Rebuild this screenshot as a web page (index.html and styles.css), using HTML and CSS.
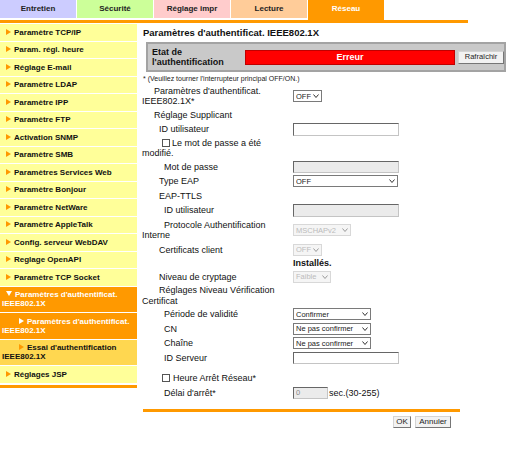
FILE: index.html
```html
<!DOCTYPE html>
<html lang="fr">
<head>
    <meta charset="UTF-8">
    <meta name="viewport" content="width=device-width, initial-scale=1.0">
    <title>Paramètres d'authentificat. IEEE802.1X</title>
    <link rel="stylesheet" href="styles.css">
</head>
<body>
    <nav class="tabs">
        <div class="tab tab-entretien">Entretien</div>
        <div class="tab tab-securite">Sécurité</div>
        <div class="tab tab-impr">Réglage impr</div>
        <div class="tab tab-lecture">Lecture</div>
        <div class="tab tab-reseau">Réseau</div>
    </nav>
    <div class="tab-line"></div>

    <div class="page">
        <ul class="side-menu">
            <li class="menu-item">Paramètre TCP/IP</li>
            <li class="menu-item">Param. régl. heure</li>
            <li class="menu-item">Réglage E-mail</li>
            <li class="menu-item">Paramètre LDAP</li>
            <li class="menu-item">Paramètre IPP</li>
            <li class="menu-item">Paramètre FTP</li>
            <li class="menu-item">Activation SNMP</li>
            <li class="menu-item">Paramètre SMB</li>
            <li class="menu-item">Paramètres Services Web</li>
            <li class="menu-item">Paramètre Bonjour</li>
            <li class="menu-item">Paramètre NetWare</li>
            <li class="menu-item">Paramètre AppleTalk</li>
            <li class="menu-item">Config. serveur WebDAV</li>
            <li class="menu-item">Reglage OpenAPI</li>
            <li class="menu-item">Paramètre TCP Socket</li>
            <li class="menu-item open">Paramètres d'authentificat. IEEE802.1X</li>
            <li class="menu-item sub current">Paramètres d'authentificat. IEEE802.1X</li>
            <li class="menu-item sub alt">Essai d'authentification IEEE802.1X</li>
            <li class="menu-item">Réglages JSP</li>
        </ul>

        <main class="content">
            <h1 class="page-title">Paramètres d'authentificat. IEEE802.1X</h1>

            <div class="status-box">
                <div class="status-label">Etat de<br>l'authentification</div>
                <div class="status-value">Erreur</div>
                <button class="small-btn refresh-btn">Rafraîchir</button>
            </div>

            <p class="note">* (Veuillez tourner l'interrupteur principal OFF/ON.)</p>

            <form class="settings-form">
                <div class="row">
                    <div class="lbl l0">Paramètres d'authentificat. IEEE802.1X*</div>
                    <div class="ctl">
                        <span class="sel"><select class="w-off"><option>OFF</option></select><svg viewBox="0 0 6 4"><polyline points="0.5,0.5 3,3.5 5.5,0.5"/></svg></span>
                    </div>
                </div>
                <div class="row">
                    <div class="lbl l0">Réglage Supplicant</div>
                    <div class="ctl"></div>
                </div>
                <div class="row">
                    <div class="lbl l1">ID utilisateur</div>
                    <div class="ctl"><input type="text" class="txt w-txt"></div>
                </div>
                <div class="row">
                    <div class="lbl lc"><input type="checkbox" class="chk">Le mot de passe a été modifié.</div>
                    <div class="ctl"></div>
                </div>
                <div class="row">
                    <div class="lbl l2">Mot de passe</div>
                    <div class="ctl"><input type="password" class="txt w-txt" disabled></div>
                </div>
                <div class="row">
                    <div class="lbl l1">Type EAP</div>
                    <div class="ctl">
                        <span class="sel"><select class="w-eap"><option>OFF</option></select><svg viewBox="0 0 6 4"><polyline points="0.5,0.5 3,3.5 5.5,0.5"/></svg></span>
                    </div>
                </div>
                <div class="row">
                    <div class="lbl l1">EAP-TTLS</div>
                    <div class="ctl"></div>
                </div>
                <div class="row">
                    <div class="lbl l2">ID utilisateur</div>
                    <div class="ctl"><input type="text" class="txt w-txt" disabled></div>
                </div>
                <div class="row tall">
                    <div class="lbl l2">Protocole Authentification Interne</div>
                    <div class="ctl">
                        <span class="sel off"><select class="w-mschap" disabled><option>MSCHAPv2</option></select><svg viewBox="0 0 6 4"><polyline points="0.5,0.5 3,3.5 5.5,0.5"/></svg></span>
                    </div>
                </div>
                <div class="row">
                    <div class="lbl l1">Certificats client</div>
                    <div class="ctl">
                        <span class="sel off"><select class="w-off" disabled><option>OFF</option></select><svg viewBox="0 0 6 4"><polyline points="0.5,0.5 3,3.5 5.5,0.5"/></svg></span>
                    </div>
                </div>
                <div class="row short">
                    <div class="lbl"></div>
                    <div class="ctl"><b>Installés.</b></div>
                </div>
                <div class="row">
                    <div class="lbl l1">Niveau de cryptage</div>
                    <div class="ctl">
                        <span class="sel off"><select class="w-faible" disabled><option>Faible</option></select><svg viewBox="0 0 6 4"><polyline points="0.5,0.5 3,3.5 5.5,0.5"/></svg></span>
                    </div>
                </div>
                <div class="row">
                    <div class="lbl l1">Réglages Niveau Vérification Certificat</div>
                    <div class="ctl"></div>
                </div>
                <div class="row">
                    <div class="lbl l2">Période de validité</div>
                    <div class="ctl">
                        <span class="sel"><select class="w-conf"><option>Confirmer</option></select><svg viewBox="0 0 6 4"><polyline points="0.5,0.5 3,3.5 5.5,0.5"/></svg></span>
                    </div>
                </div>
                <div class="row">
                    <div class="lbl l2">CN</div>
                    <div class="ctl">
                        <span class="sel"><select class="w-conf"><option>Ne pas confirmer</option></select><svg viewBox="0 0 6 4"><polyline points="0.5,0.5 3,3.5 5.5,0.5"/></svg></span>
                    </div>
                </div>
                <div class="row">
                    <div class="lbl l2">Chaîne</div>
                    <div class="ctl">
                        <span class="sel"><select class="w-conf"><option>Ne pas confirmer</option></select><svg viewBox="0 0 6 4"><polyline points="0.5,0.5 3,3.5 5.5,0.5"/></svg></span>
                    </div>
                </div>
                <div class="row">
                    <div class="lbl l2">ID Serveur</div>
                    <div class="ctl"><input type="text" class="txt w-txt"></div>
                </div>
                <div class="row spaced">
                    <div class="lbl lc"><input type="checkbox" class="chk wide">Heure Arrêt Réseau*</div>
                    <div class="ctl"></div>
                </div>
                <div class="row">
                    <div class="lbl l2">Délai d'arrêt*</div>
                    <div class="ctl"><input type="text" class="txt w-delay" value="0" disabled><span class="unit">sec.(30-255)</span></div>
                </div>

                <div class="form-footer">
                    <button type="submit" class="small-btn ok-btn">OK</button>
                    <button type="reset" class="small-btn cancel-btn">Annuler</button>
                </div>
            </form>
        </main>
    </div>
</body>
</html>
```

FILE: styles.css
```css
:root {
    --orange: #ff9900;
    --menu-yellow: #ffff99;
    --menu-gold: #ffd750;
}

body {
    margin: 0;
    padding: 0;
    font-family: "Liberation Sans", Arial, sans-serif;
    font-size: 9px;
    color: #111;
    background: #fff;
}

/* top tabs */
.tabs {
    display: flex;
    align-items: flex-start;
    gap: 1px;
    height: 20px;
}

.tab {
    width: 76px;
    height: 18px;
    line-height: 18px;
    text-align: center;
    font-weight: bold;
    font-size: 8px;
    color: #222;
}

.tab-entretien { background: #ccccff; }
.tab-securite { background: #ccff99; }
.tab-impr { background: #ffcccc; }
.tab-lecture { background: #ffcc99; }

.tab-reseau {
    background: var(--orange);
    color: #fff;
    height: 20px;
}

.tab-line {
    width: 468px;
    height: 3px;
    background: var(--orange);
}

.page {
    display: flex;
    align-items: flex-start;
    gap: 5px;
}

/* left menu */
.side-menu {
    list-style: none;
    margin: 1px 0 0;
    padding: 0 0 2px;
    width: 137px;
    flex-shrink: 0;
    display: flex;
    flex-direction: column;
    gap: 1px;
    border-bottom: 3px solid var(--orange);
}

.menu-item {
    background: var(--menu-yellow);
    font-weight: bold;
    font-size: 8px;
    line-height: 9px;
    padding: 3.75px 2px;
    color: #111;
}

.menu-item::before {
    content: "";
    display: inline-block;
    border-left: 5px solid var(--orange);
    border-top: 3px solid transparent;
    border-bottom: 3px solid transparent;
    margin: 0 3px 0 4px;
}

.menu-item.open,
.menu-item.current {
    background: var(--orange);
    color: #fff;
}

.menu-item.open::before {
    border-left: 3px solid transparent;
    border-right: 3px solid transparent;
    border-top: 5px solid #fff;
    border-bottom: 0;
    margin: 0 3px 1px 4px;
}

.menu-item.sub::before {
    margin-left: 17px;
}

.menu-item.current::before {
    border-left-color: #fff;
}

.menu-item.alt {
    background: var(--menu-gold);
}

/* content */
.content {
    width: 366px;
}

.page-title {
    font-size: 9.5px;
    line-height: 12px;
    font-weight: bold;
    margin: 4px 0 0 1px;
}

.status-box {
    margin: 3px 0 0 4px;
    width: 360px;
    height: 30px;
    box-sizing: border-box;
    border: 2px solid #a3a3a3;
    background: #c9c9c9;
    display: flex;
    align-items: center;
    padding-left: 4px;
}

.status-label {
    width: 93px;
    font-weight: bold;
    line-height: 10.5px;
}

.status-value {
    width: 210px;
    height: 15px;
    box-sizing: border-box;
    background: #ff0000;
    border: 1px solid #c00000;
    color: #fff;
    font-weight: bold;
    text-align: center;
    line-height: 13px;
}

.small-btn {
    font-family: "Liberation Sans", Arial, sans-serif;
    font-size: 8px;
    height: 12px;
    padding: 0 2px;
    line-height: 10px;
    background: #f2f2f2;
    color: #222;
    border: 1px solid;
    border-color: #d4d4d4 #767676 #767676 #d4d4d4;
    border-radius: 0;
    cursor: pointer;
}

.refresh-btn {
    width: 46px;
    height: 13px;
    margin-left: 3px;
    font-size: 7.5px;
}

.note {
    font-size: 7px;
    line-height: 9px;
    margin: 1.5px 0 0 1px;
    color: #222;
}

.settings-form {
    margin-top: 2px;
}

.row {
    display: grid;
    grid-template-columns: 151px 1fr;
    align-items: center;
    min-height: 14.5px;
    padding: 1px 0;
    box-sizing: border-box;
}

.row.tall {
    padding: 2px 0;
}

.row.short {
    min-height: 12.5px;
}

.row.spaced {
    margin-top: 6px;
}

.lbl {
    line-height: 10.5px;
}

.l0 { text-indent: 12px; }
.l1 { text-indent: 17px; }
.l2 { text-indent: 22px; }
.lc { text-indent: 20px; }

.ctl {
    display: flex;
    align-items: center;
    line-height: 10.5px;
}

.chk {
    -webkit-appearance: none;
    appearance: none;
    width: 8px;
    height: 8px;
    margin: 0 2px 0 0;
    border: 1px solid #555;
    background: #fff;
    vertical-align: -1px;
    text-indent: 0;
}

.chk.wide {
    margin-right: 3px;
}

.txt {
    height: 12.5px;
    box-sizing: border-box;
    border: 1px solid;
    border-color: #666 #c4c4c4 #c4c4c4 #666;
    padding: 0 2px;
    font-family: "Liberation Sans", Arial, sans-serif;
    font-size: 7.5px;
    background: #fff;
    color: #888;
    margin: 0;
}

.txt:disabled {
    background: #ebebeb;
}

.w-txt { width: 106px; }
.w-delay { width: 35px; }

.unit {
    margin-left: 1px;
}

.sel {
    position: relative;
    display: inline-block;
    height: 12px;
}

.sel select {
    -webkit-appearance: none;
    appearance: none;
    height: 12px;
    box-sizing: border-box;
    border: 1px solid #7a7a7a;
    border-radius: 0;
    background: #fff;
    color: #222;
    font-family: "Liberation Sans", Arial, sans-serif;
    font-size: 7.5px;
    padding: 0 10px 0 2px;
    margin: 0;
}

.sel svg {
    position: absolute;
    right: 3px;
    top: 4px;
    width: 6px;
    height: 4px;
    fill: none;
    stroke: #333;
    stroke-width: 1;
    pointer-events: none;
}

.sel.off select {
    background: #f1f1f1;
    border-color: #c8c8c8;
    color: #a0a0a0;
}

.sel.off svg {
    stroke: #9a9a9a;
}

.w-off { width: 29px; }
.w-eap { width: 105px; }
.w-mschap { width: 58px; }
.w-faible { width: 38px; }
.w-conf { width: 78px; }

.form-footer {
    margin: 9px 0 0 1px;
    width: 317px;
    box-sizing: border-box;
    border-top: 3px solid var(--orange);
    padding: 4px 9px 0 0;
    display: flex;
    justify-content: flex-end;
    gap: 4px;
}

.ok-btn { width: 18px; }
.cancel-btn { width: 36px; }
```
